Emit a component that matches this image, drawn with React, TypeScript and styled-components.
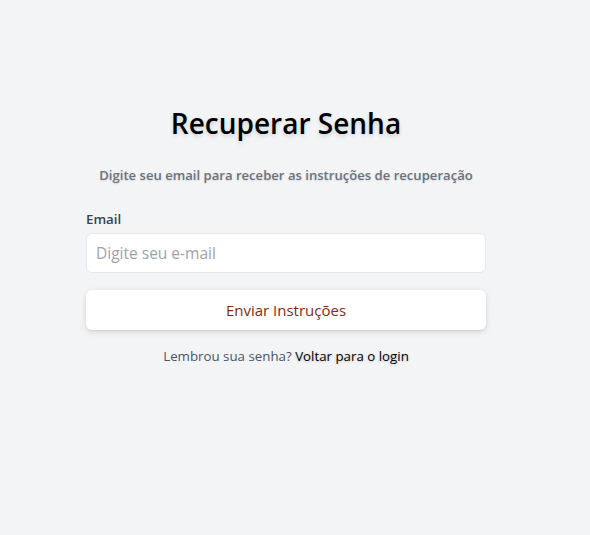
import React from "react";
import styled, { createGlobalStyle } from "styled-components";

const Global = createGlobalStyle`
  html, body { margin: 0; padding: 0; background: #f3f4f6; }
  body { font-family: "Open Sans", "Noto Sans", sans-serif; }
  * { box-sizing: border-box; }
`;

const Page = styled.div`
  min-height: 535px;
  padding: 103px 104px 0 86px;
  display: flex;
  justify-content: center;
`;

const Card = styled.div`
  width: 400px;
  display: flex;
  flex-direction: column;
`;

const Title = styled.h1`
  margin: 0;
  font-size: 28px;
  line-height: 40px;
  font-weight: 600;
  color: #000;
  text-align: center;
  text-shadow: 0 2px 4px rgba(0, 0, 0, 0.15);
`;

const Subtitle = styled.p`
  margin: 22px 0 0;
  font-size: 13.1px;
  line-height: 20px;
  font-weight: 600;
  color: #6b7280;
  text-align: center;
  text-shadow: 0 1px 2px rgba(0, 0, 0, 0.12);
`;

const Field = styled.div`
  margin-top: 24px;
  display: flex;
  flex-direction: column;
  gap: 4px;
`;

const Label = styled.label`
  font-size: 13.3px;
  line-height: 20px;
  font-weight: 600;
  color: #374151;
`;

const Input = styled.input`
  height: 40px;
  width: 100%;
  border: 1px solid #e5e7eb;
  border-radius: 6px;
  background: #fff;
  padding: 0 9px;
  font-family: inherit;
  font-size: 15.5px;
  color: #111827;
  outline: none;
  &::placeholder { color: #9ca3af; }
`;

const Button = styled.button`
  margin-top: 17px;
  height: 40px;
  width: 100%;
  border: none;
  border-radius: 6px;
  background: #fff;
  box-shadow: 0 2px 6px rgba(0, 0, 0, 0.12), 0 1px 2px rgba(0, 0, 0, 0.06);
  font-family: inherit;
  font-size: 15px;
  color: #7c2d12;
  cursor: pointer;
`;

const Footer = styled.p`
  margin: 16px 0 0;
  text-align: center;
  font-size: 13.3px;
  line-height: 20px;
  color: #4b5563;
`;

const Link = styled.a`
  color: #000;
  font-weight: 500;
  text-decoration: none;
  text-shadow: 0 1px 3px rgba(0, 0, 0, 0.2);
`;

export default function App() {
  return (
    <>
      <Global />
      <Page>
        <Card>
          <Title>Recuperar Senha</Title>
          <Subtitle>Digite seu email para receber as instruções de recuperação</Subtitle>
          <Field>
            <Label htmlFor="email">Email</Label>
            <Input id="email" type="email" placeholder="Digite seu e-mail" />
          </Field>
          <Button type="button">Enviar Instruções</Button>
          <Footer>
            Lembrou sua senha? <Link href="#">Voltar para o login</Link>
          </Footer>
        </Card>
      </Page>
    </>
  );
}
